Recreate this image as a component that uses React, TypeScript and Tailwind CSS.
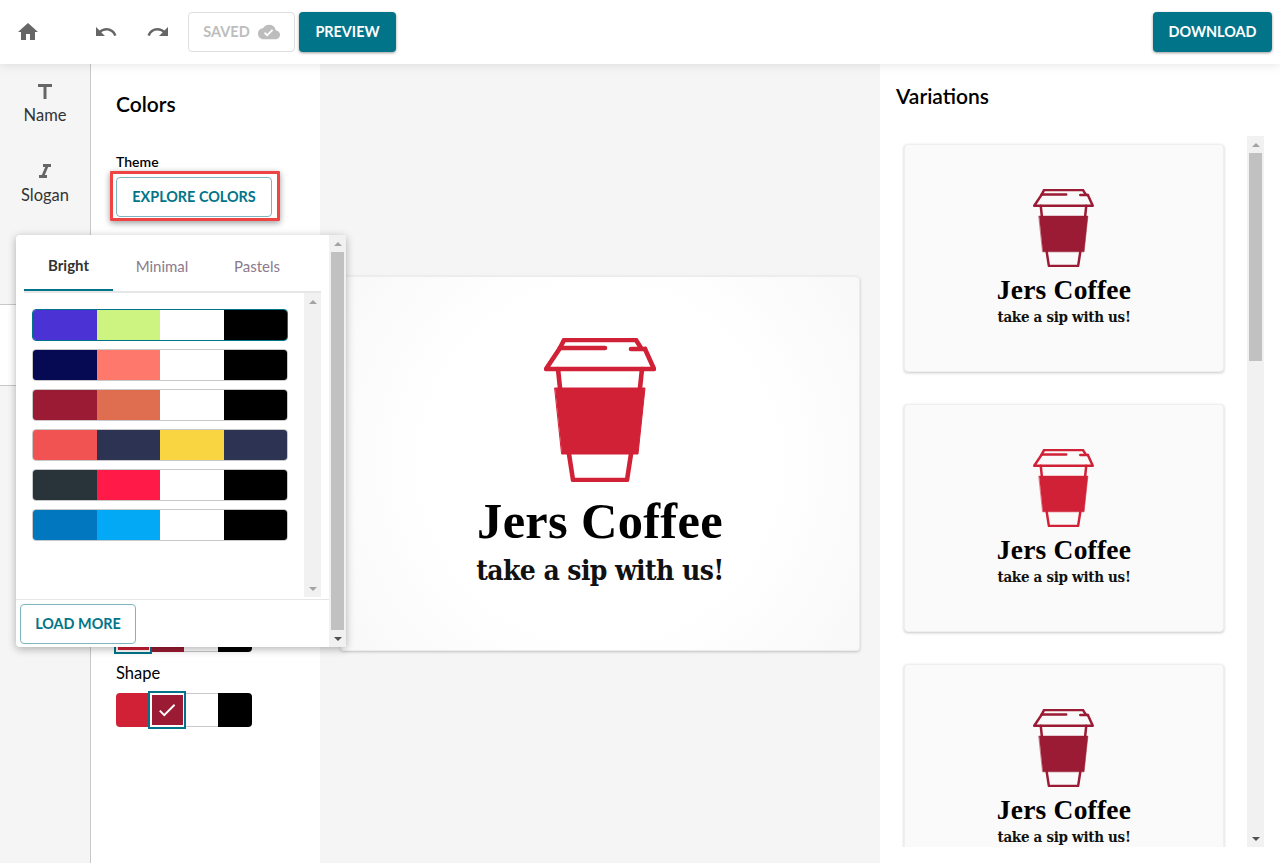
import { MdCheck, MdCloudDone, MdFormatItalic, MdHome, MdRedo, MdTitle, MdUndo } from 'react-icons/md';

const palettes = [
  ['#4a32d4', '#cdf381', '#ffffff', '#000000'],
  ['#060a52', '#ff786c', '#ffffff', '#000000'],
  ['#9a1b33', '#df6e50', '#ffffff', '#000000'],
  ['#f15353', '#2d3352', '#fad542', '#2d3352'],
  ['#29343a', '#ff1a47', '#ffffff', '#000000'],
  ['#0177bf', '#03a9f4', '#ffffff', '#000000'],
];

const Cup = ({ color, className }: { color: string; className: string }) => (
  <svg viewBox="0 0 112 144" className={className} fill="none" stroke={color} strokeWidth="4.6" strokeLinecap="round" strokeLinejoin="round">
    <path d="M16 10 L20 2 H92 L97 10" />
    <path d="M16 10 H61 M87 11 H101" />
    <path d="M16 10 L2 31 H110 L101 11" />
    <path d="M14 31 L16 50 M98 31 L96 50" />
    <path d="M11 50 H101 L94 116 H18 Z" fill={color} strokeWidth="1" />
    <path d="M25 116 L29 142 H83 L87 116" />
  </svg>
);

const Logo = ({ color }: { color: string }) => (
  <div className="flex flex-col items-center">
    <Cup color={color} className="-ml-[2px] h-[78px] w-[61px]" />
    <div className="mt-[7px] font-['Liberation_Serif',serif] text-[27.5px] leading-[32px] font-bold tracking-[0.2px] text-black">Jers Coffee</div>
    <div className="mt-[1px] font-['DejaVu_Serif_Condensed','DejaVu_Serif',serif] text-[15px] leading-[20px] font-bold tracking-[-0.3px] text-[#111]">take a sip with us!</div>
  </div>
);

const ScrollBar = ({ thumb, dark }: { thumb: string; dark?: boolean }) => (
  <div className="flex h-full w-[17px] shrink-0 flex-col items-center bg-[#f1f1f1]">
    <div className="flex h-[17px] shrink-0 items-center justify-center">
      <div className="h-0 w-0 border-x-[4px] border-b-[4px] border-x-transparent border-b-[#a3a3a3]" />
    </div>
    <div className="flex-1 self-stretch px-[2px]">
      <div className={thumb} />
    </div>
    <div className="flex h-[17px] shrink-0 items-center justify-center">
      <div className={dark ? 'h-0 w-0 border-x-[4px] border-t-[4px] border-x-transparent border-t-[#505050]' : 'h-0 w-0 border-x-[4px] border-t-[4px] border-x-transparent border-t-[#a3a3a3]'} />
    </div>
  </div>
);

const VariationCard = ({ color }: { color: string }) => (
  <div className="flex h-[228px] w-[320px] shrink-0 items-center justify-center rounded border border-[#efefef] bg-[#fafafa] pb-[1px] shadow-[0_1px_3px_rgba(0,0,0,0.22)]">
    <Logo color={color} />
  </div>
);

export default function App() {
  return (
    <div className="relative flex h-[863px] w-[1280px] flex-col overflow-hidden bg-[#f5f5f5] font-['Lato',sans-serif] text-black">
      <header className="relative z-10 flex h-16 shrink-0 items-center bg-white pl-[16px] pr-2 shadow-[0_1px_10px_rgba(0,0,0,0.1)]">
        <MdHome className="mt-[-1px] text-[24px] text-[#666]" />
        <MdUndo className="ml-[54px] text-[24px] text-[#666]" />
        <MdRedo className="ml-[28px] text-[24px] text-[#666]" />
        <div className="ml-[18px] flex h-10 w-[107px] items-center justify-center gap-[8px] rounded border border-[#dedede] text-[14.5px] font-bold text-[#bdbdbd]">
          SAVED
          <MdCloudDone className="text-[22px]" />
        </div>
        <button className="ml-1 h-10 w-[97px] rounded bg-[#027489] text-[14.4px] font-bold text-white shadow-[0_1px_3px_rgba(0,0,0,0.4)]">PREVIEW</button>
        <button className="ml-auto h-10 w-[119px] rounded bg-[#027489] text-[14.4px] font-bold text-white shadow-[0_1px_3px_rgba(0,0,0,0.4)]">DOWNLOAD</button>
      </header>

      <div className="flex min-h-0 flex-1">
        {/* left rail */}
        <nav className="flex w-[91px] shrink-0 flex-col border-r border-[#c8c8c8] bg-[#f5f5f5]">
          <div className="flex h-[80px] flex-col items-center pt-[16px] text-[16.5px] leading-[20px] text-[#333]">
            <MdTitle className="h-[24px] text-[26px] text-[#666]" />
            <span className="mt-[1px]">Name</span>
          </div>
          <div className="flex h-[80px] flex-col items-center pt-[16px] text-[16.5px] leading-[20px] text-[#333]">
            <MdFormatItalic className="h-[24px] text-[24px] text-[#666]" />
            <span className="mt-[1px]">Slogan</span>
          </div>
          <div className="mt-20 h-[82px] w-[90px] border-y border-[#c8c8c8] bg-white" />
        </nav>

        {/* colors panel */}
        <aside className="flex w-[229px] shrink-0 flex-col bg-white pl-[25px]">
          <h2 className="mt-[27px] text-[21px] leading-[26px] font-semibold">Colors</h2>
          <div className="mt-[36px] text-[14px] leading-[18px] font-semibold">Theme</div>
          <div className="relative mt-[6px] w-[156px]">
            <button className="h-10 w-full rounded border border-[#7fb5c1] bg-white text-[14.4px] font-bold text-[#027489]">EXPLORE COLORS</button>
            <div className="absolute -top-[6px] -bottom-[4px] -left-[6px] -right-[8px] rounded-[1px] border-[3px] border-[#ef4444] shadow-[0_2px_6px_rgba(0,0,0,0.4)]" />
          </div>
          <div className="mt-[401px] flex h-[34px] w-[136px]">
            <div className="z-[1] -my-[2px] -ml-[2px] flex h-[38px] w-[38px] items-center justify-center border-[2px] border-[#027489] bg-white">
              <div className="h-[30px] w-[31px] bg-[#d12136]" />
            </div>
            <div className="w-[32px] bg-[#9a1b33]" />
            <div className="w-[34px] border-y border-[#c8c8c8]" />
            <div className="w-[34px] rounded-r bg-black" />
          </div>
          <div className="mt-[10px] text-[16.5px] leading-[22px]">Shape</div>
          <div className="mt-[9px] flex h-[34px] w-[136px]">
            <div className="w-[32px] rounded-l bg-[#d12136]" />
            <div className="z-[1] -my-[2px] flex h-[38px] w-[38px] items-center justify-center border-[2px] border-[#027489] bg-white">
              <div className="flex h-[30px] w-[31px] items-center justify-center bg-[#9a1b33]">
                <MdCheck className="text-[22px] text-white" />
              </div>
            </div>
            <div className="w-[32px] border-y border-[#c8c8c8]" />
            <div className="w-[34px] rounded-r bg-black" />
          </div>
        </aside>

        {/* preview */}
        <main className="w-[560px] shrink-0 px-5 pt-[212px]">
          <div className="flex h-[375px] w-[520px] flex-col items-center rounded border border-[#ececec] bg-[radial-gradient(circle,#ffffff_55%,#f8f8f8_100%)] pt-[61px] shadow-[0_1px_3px_rgba(0,0,0,0.22)]">
            <Cup color="#d12136" className="h-[144px] w-[112px]" />
            <div className="mt-[11px] font-['Liberation_Serif',serif] text-[50.5px] leading-[56px] font-bold tracking-[0.3px] text-black">Jers Coffee</div>
            <div className="mt-[5px] font-['DejaVu_Serif_Condensed','DejaVu_Serif',serif] text-[28px] leading-[34px] font-bold tracking-[-0.6px] text-[#111]">take a sip with us!</div>
          </div>
        </main>

        {/* variations */}
        <section className="flex w-[400px] shrink-0 flex-col bg-white">
          <h2 className="ml-4 mt-[19px] text-[21px] leading-[26px] font-semibold">Variations</h2>
          <div className="mt-[27px] flex h-[711px]">
            <div className="flex w-[367px] flex-col gap-8 overflow-hidden pl-6 pt-2">
              <VariationCard color="#9a1b33" />
              <VariationCard color="#d12136" />
              <VariationCard color="#9a1b33" />
            </div>
            <ScrollBar dark thumb="h-[208px] w-full bg-[#c1c1c1]" />
          </div>
        </section>
      </div>

      {/* explore colors popover */}
      <div className="absolute left-4 top-[235px] z-20 flex h-[412px] w-[330px] rounded bg-white shadow-[0_2px_8px_rgba(0,0,0,0.3)]">
        <div className="flex w-[313px] flex-col">
          <div className="ml-2 flex h-[58px] w-[297px] shrink-0 border-b-2 border-[#e6e6e6] text-[15px]">
            <div className="flex w-[89px] items-center justify-center border-b-2 border-[#027489] pt-[6px] font-bold text-[#333]">Bright</div>
            <div className="flex w-[98px] items-center justify-center pt-[6px] text-[#8c7a8c]">Minimal</div>
            <div className="flex w-[92px] items-center justify-center pt-[6px] text-[#8c7a8c]">Pastels</div>
          </div>
          <div className="ml-2 flex h-[304px] shrink-0 items-stretch">
            <div className="flex w-[280px] flex-col gap-2 pl-2 pt-4">
              {palettes.map((colors, i) => (
                <div key={i} className={i === 0 ? 'flex h-8 w-[256px] overflow-hidden rounded border border-[#027489]' : 'flex h-8 w-[256px] overflow-hidden rounded border border-[#c8c8c8]'}>
                  {colors.map((c, j) => (
                    <div key={j} className="h-full flex-1" style={{ backgroundColor: c }} />
                  ))}
                </div>
              ))}
            </div>
            <ScrollBar thumb="h-0 w-full" />
          </div>
          <div className="mt-[2px] flex-1 border-t border-[#e6e6e6] pl-1 pt-1">
            <button className="h-10 w-[116px] rounded border border-[#7fb5c1] bg-white text-[14.4px] font-bold text-[#027489]">LOAD MORE</button>
          </div>
        </div>
        <ScrollBar dark thumb="h-full w-full bg-[#c1c1c1]" />
      </div>
    </div>
  );
}
